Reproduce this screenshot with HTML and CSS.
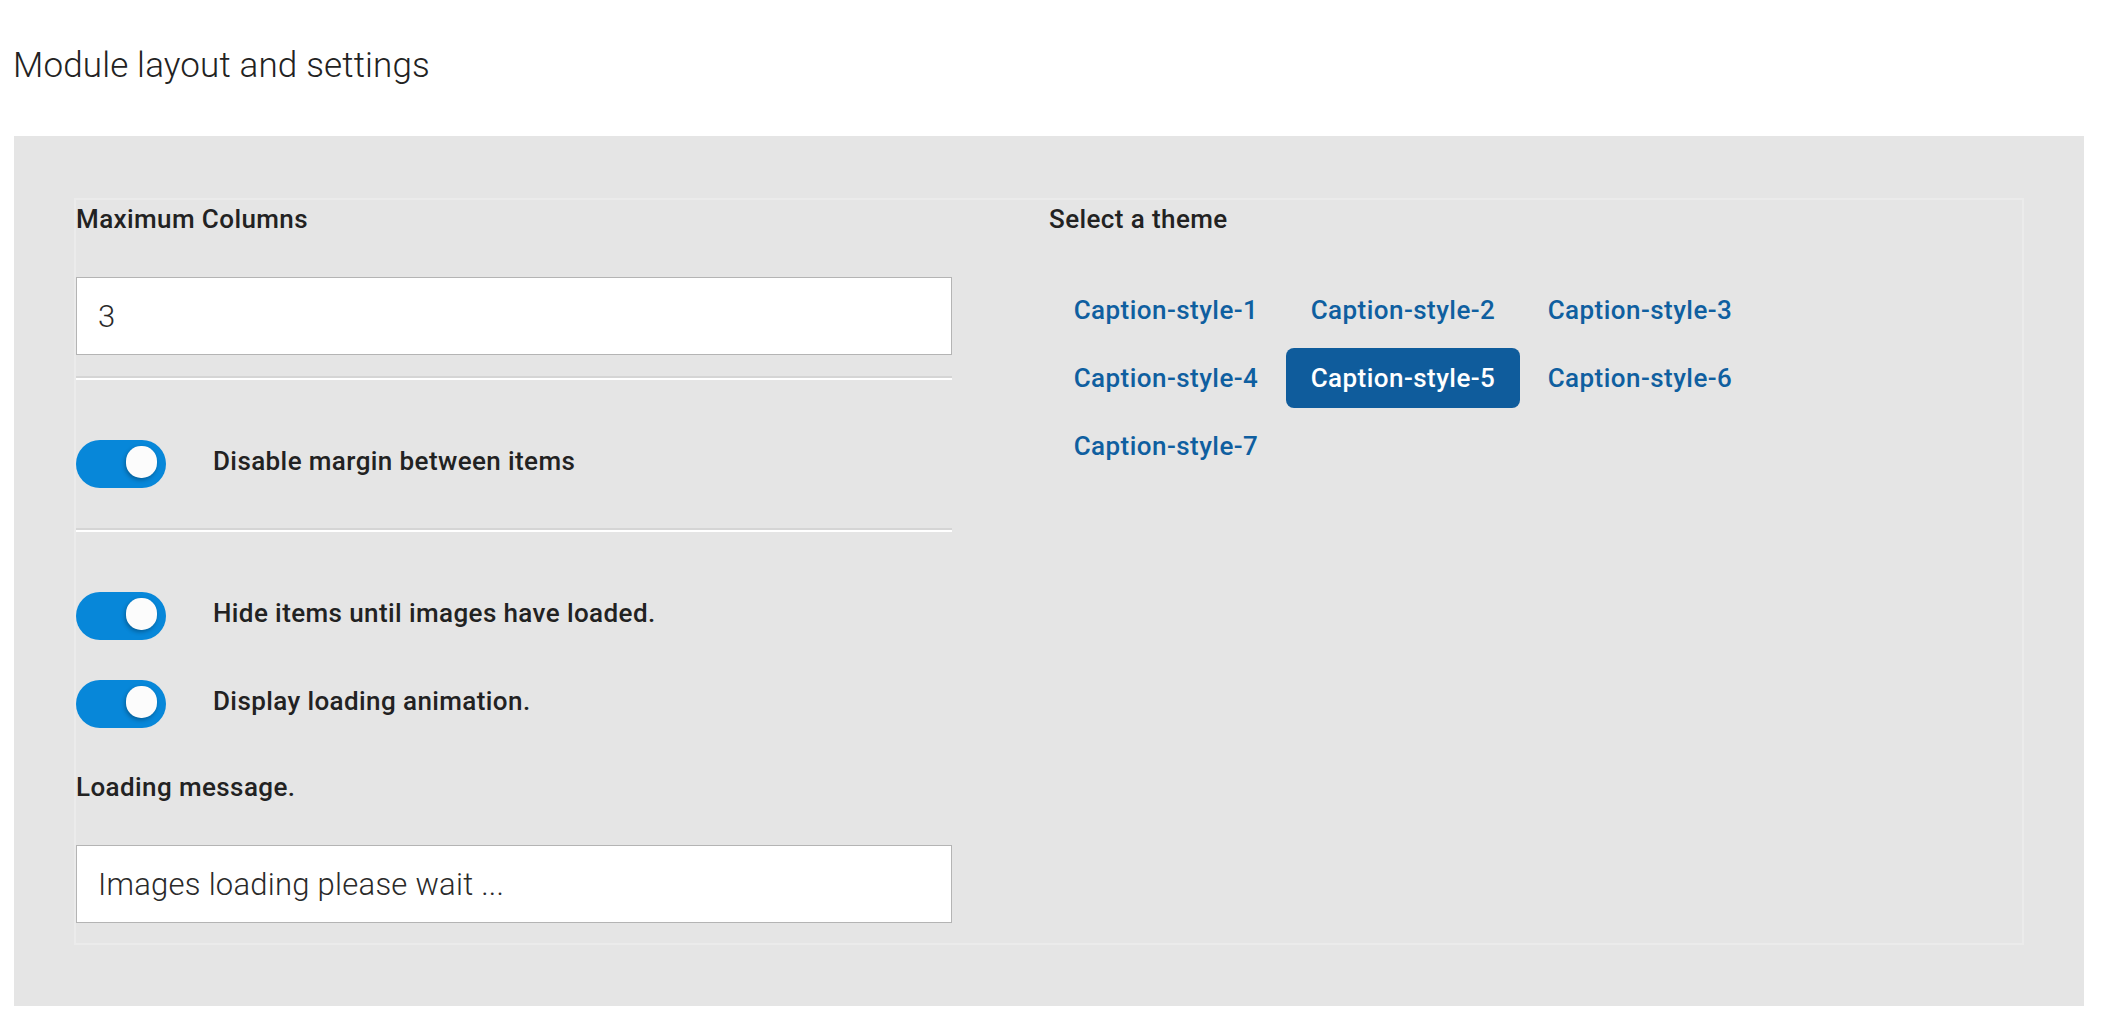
FILE: index.html
```html
<!DOCTYPE html>
<html lang="en">
<head>
<meta charset="utf-8">
<title>Module layout and settings</title>
<link rel="stylesheet" href="styles.css">
</head>
<body>
<h1 class="page-title">Module layout and settings</h1>
<div class="panel">
  <div class="settings-box">
    <div class="col col-left">
      <label class="field-label" for="maxcols">Maximum Columns</label>
      <input class="text-input" id="maxcols" type="text" value="3">
      <hr class="divider divider-first">
      <div class="switch-row switch-row-after-divider">
        <span class="switch"><span class="knob"></span></span>
        <span class="switch-label">Disable margin between items</span>
      </div>
      <hr class="divider divider-mid">
      <div class="switch-row switch-row-after-divider">
        <span class="switch"><span class="knob"></span></span>
        <span class="switch-label">Hide items until images have loaded.</span>
      </div>
      <div class="switch-row switch-row-next">
        <span class="switch"><span class="knob"></span></span>
        <span class="switch-label">Display loading animation.</span>
      </div>
      <label class="field-label field-label-spaced" for="loadmsg">Loading message.</label>
      <input class="text-input" id="loadmsg" type="text" value="Images loading please wait ...">
    </div>
    <div class="col col-right">
      <div class="field-label">Select a theme</div>
      <ul class="theme-list">
        <li class="theme-item">Caption-style-1</li>
        <li class="theme-item">Caption-style-2</li>
        <li class="theme-item">Caption-style-3</li>
        <li class="theme-item">Caption-style-4</li>
        <li class="theme-item theme-item-active">Caption-style-5</li>
        <li class="theme-item">Caption-style-6</li>
        <li class="theme-item">Caption-style-7</li>
      </ul>
    </div>
  </div>
</div>
</body>
</html>
```
FILE: styles.css
```css
html, body {
  margin: 0;
  padding: 0;
  background: #ffffff;
}

body {
  font-family: Roboto, "Liberation Sans", Arial, sans-serif;
  color: #222222;
}

.page-title {
  margin: 46px 0 50px 13px;
  font-size: 35px;
  font-weight: 300;
  line-height: 40px;
  letter-spacing: 0.15px;
  color: #222222;
}

.panel {
  margin: 0 26px 0 14px;
  background: #e5e5e5;
  padding: 62px 60px 61px;
}

.settings-box {
  border: 2px solid #ebebeb;
  display: grid;
  grid-template-columns: 1fr 1fr;
}

.col-left {
  width: 90%;
  padding-bottom: 20px;
}

.field-label {
  display: block;
  padding-top: 1px;
  font-size: 26px;
  font-weight: 500;
  line-height: 36px;
  letter-spacing: 0.4px;
  color: #222222;
}

.field-label-spaced {
  margin-top: 40px;
}

.text-input {
  display: block;
  box-sizing: border-box;
  width: 100%;
  height: 78px;
  margin: 40px 0 0;
  border: 1px solid #b4b4b4;
  border-radius: 0;
  background: #ffffff;
  padding: 0 21px;
  font-family: Roboto, "Liberation Sans", Arial, sans-serif;
  font-size: 31px;
  font-weight: 300;
  letter-spacing: 0.25px;
  color: #2a2a2a;
  outline: none;
}

.divider {
  height: 0;
  border: 0;
  border-top: 2px solid #d5d5d5;
  border-bottom: 2px solid #ffffff;
  margin: 0;
}

.divider-first {
  margin-top: 21px;
}

.divider-mid {
  margin-top: 40px;
}

.switch-row {
  display: flex;
  align-items: center;
  gap: 47px;
}

.switch-row-after-divider {
  margin-top: 60px;
}

.switch-row-next {
  margin-top: 40px;
}

.switch {
  position: relative;
  flex: none;
  width: 90px;
  height: 48px;
  border-radius: 24px;
  background: #0787d9;
}

.knob {
  position: absolute;
  left: 50px;
  top: 6px;
  width: 31px;
  height: 32px;
  border-radius: 15px;
  background: #fcfcfc;
  box-shadow: -1px 2px 4px rgba(0, 0, 0, 0.3);
}

.switch-label {
  margin-bottom: 5px;
  font-size: 26px;
  font-weight: 500;
  line-height: 37px;
  letter-spacing: 0.4px;
  color: #222222;
}

.theme-list {
  list-style: none;
  margin: 43px 0 0;
  padding: 0;
  display: grid;
  grid-template-columns: repeat(3, 234px);
  gap: 8px 3px;
}

.theme-item {
  height: 60px;
  line-height: 60px;
  text-align: center;
  border-radius: 8px;
  font-size: 26px;
  font-weight: 500;
  letter-spacing: 0.45px;
  color: #0f5fa0;
}

.theme-item-active {
  background: #0f5c9c;
  color: #ffffff;
}
```
